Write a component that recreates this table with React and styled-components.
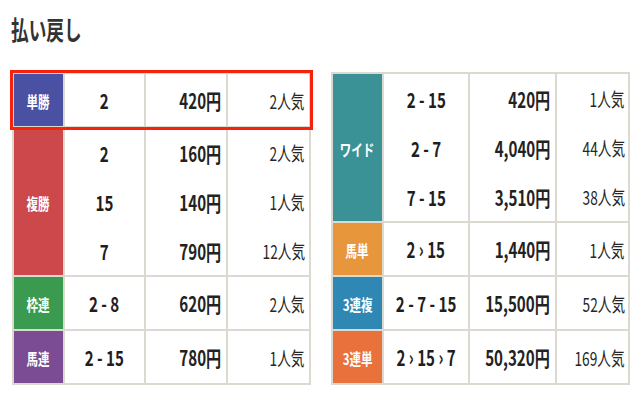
import React from 'react';
import styled, { createGlobalStyle, css } from 'styled-components';

const GlobalStyle = createGlobalStyle`
  body {
    margin: 0;
    background: #fff;
    color: #222;
    font-family: "Noto Sans CJK JP", "Noto Sans", sans-serif;
  }
`;

const LINE = '#dcd9d1';

const Page = styled.div`
  padding: 14px 11px 0 11px;
`;

const Title = styled.h2`
  margin: 0 0 28px;
  font-size: 26px;
  line-height: 30px;
  font-weight: 700;
  color: #333;
`;

const Squeeze = styled.span`
  display: inline-block;
  white-space: nowrap;
  transform: scaleX(${p => p.$scale || 0.72});
  transform-origin: ${p => p.$origin || 'center'};
`;

const Tables = styled.div`
  display: flex;
  align-items: flex-start;
  gap: 20px;
  padding-left: 1px;
`;

const Table = styled.div`
  width: 299px;
  box-sizing: border-box;
  border: 2px solid ${LINE};
  display: flex;
  flex-direction: column;
`;

const Group = styled.div`
  display: flex;
  & + & {
    border-top: 2px solid ${LINE};
  }
  ${p =>
    p.$highlight &&
    css`
      position: relative;
      z-index: 1;
      outline: 3px solid #f5230c;
      outline-offset: 1px;
    `}
`;

const Label = styled.div`
  width: 49px;
  flex: none;
  display: flex;
  align-items: center;
  justify-content: center;
  padding-top: 2px;
  background: ${p => p.$color};
  color: #fff;
  font-size: 16px;
  font-weight: 700;
`;

const Body = styled.div`
  flex: 1;
  display: flex;
  flex-direction: column;
`;

const Row = styled.div`
  display: grid;
  grid-template-columns: ${p => p.$cols};
  height: ${p => p.$h}px;
`;

const Cell = styled.div`
  border-left: 2px solid ${LINE};
  display: flex;
  align-items: center;
  justify-content: ${p => (p.$right ? 'flex-end' : 'center')};
  padding-right: ${p => p.$pad || 0}px;
`;

const Horse = styled(Squeeze)`
  font-size: 21px;
  font-weight: 700;
  color: #1e1e1e;
`;

const Pay = styled(Squeeze)`
  font-size: 21px;
  font-weight: 600;
  color: #222;
`;

const Pop = styled(Squeeze)`
  font-size: 19px;
  font-weight: 400;
  color: #262626;
`;

const left = {
  cols: '81px 82px 83px',
  payPad: 5,
  popPad: 4,
  groups: [
    { label: '単勝', color: '#4a51a2', highlight: true, rows: [['2', '420円', '2人気']] },
    {
      label: '複勝',
      color: '#cc484b',
      rows: [
        ['2', '160円', '2人気'],
        ['15', '140円', '1人気'],
        ['7', '790円', '12人気'],
      ],
    },
    { label: '枠連', color: '#3a9b50', rows: [['2 - 8', '620円', '2人気']] },
    { label: '馬連', color: '#7b4b93', rows: [['2 - 15', '780円', '1人気']] },
  ],
};

const right = {
  cols: '86px 87px 73px',
  payPad: 5,
  popPad: 3,
  groups: [
    {
      label: 'ワイド',
      color: '#3a9297',
      rows: [
        ['2 - 15', '420円', '1人気'],
        ['2 - 7', '4,040円', '44人気'],
        ['7 - 15', '3,510円', '38人気'],
      ],
    },
    { label: '馬単', color: '#e8963b', rows: [['2 › 15', '1,440円', '1人気']] },
    { label: '3連複', color: '#2f88b4', rows: [['2 - 7 - 15', '15,500円', '52人気']] },
    { label: '3連単', color: '#e9713b', rows: [['2 › 15 › 7', '50,320円', '169人気']] },
  ],
};

const PayoutTable = ({ data }) => (
  <Table>
    {data.groups.map(g => (
      <Group key={g.label} $highlight={g.highlight}>
        <Label $color={g.color}>
          <Squeeze>{g.label}</Squeeze>
        </Label>
        <Body>
          {g.rows.map(([horse, pay, pop], i) => (
            <Row key={i} $cols={data.cols} $h={g.rows.length > 1 ? 49 : 52}>
              <Cell>
                <Horse>{horse}</Horse>
              </Cell>
              <Cell $right $pad={data.payPad}>
                <Pay $origin="right">{pay}</Pay>
              </Cell>
              <Cell $right $pad={data.popPad}>
                <Pop $origin="right">{pop}</Pop>
              </Cell>
            </Row>
          ))}
        </Body>
      </Group>
    ))}
  </Table>
);

export default function App() {
  return (
    <>
      <GlobalStyle />
      <Page>
        <Title>
          <Squeeze $origin="left" $scale={0.68}>払い戻し</Squeeze>
        </Title>
        <Tables>
          <PayoutTable data={left} />
          <PayoutTable data={right} />
        </Tables>
      </Page>
    </>
  );
}
